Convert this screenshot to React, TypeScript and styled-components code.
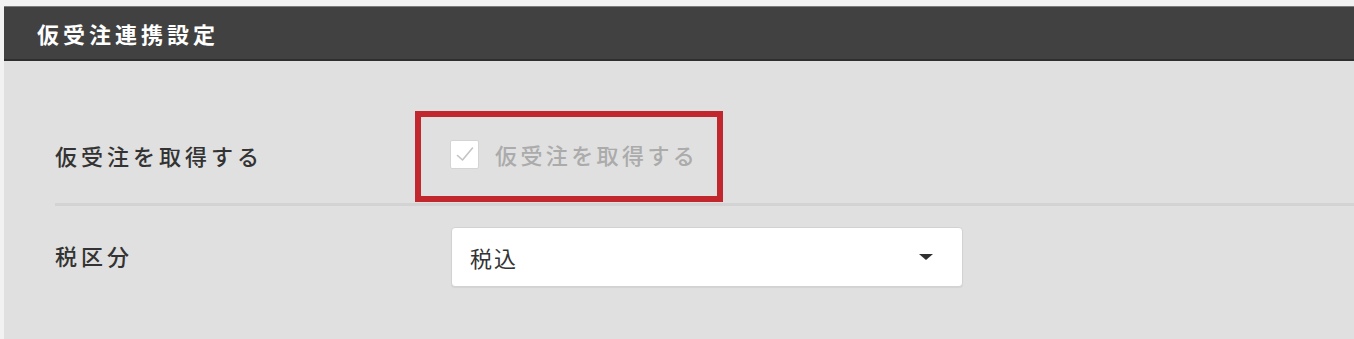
import React from "react";
import styled, { createGlobalStyle } from "styled-components";

const GlobalStyle = createGlobalStyle`
  html, body {
    margin: 0;
    padding: 0;
    background: #f2f2f2;
    font-family: "Noto Sans CJK JP", "Noto Sans", sans-serif;
  }
  * { box-sizing: border-box; }
`;

const Panel = styled.section`
  margin: 6px 0 0 4px;
  height: 333px;
  display: flex;
  flex-direction: column;
  overflow: hidden;
`;

const Header = styled.header`
  height: 55px;
  flex: none;
  display: flex;
  align-items: center;
  padding-left: 33px;
  background: #414141;
  border-top: 1px solid #7c7c7c;
  border-bottom: 2px solid #2e2e2e;
  box-shadow: 0 1px 0 #9a9a9a;
  color: #ffffff;
  font-size: 22px;
  font-weight: 700;
  letter-spacing: 4px;
`;

const Body = styled.div`
  flex: 1;
  background: #e0e0e0;
  padding-left: 51px;
`;

const Row = styled.div<{ $top: number; $bottom: number; $divider?: boolean }>`
  display: grid;
  grid-template-columns: 395px 1fr;
  align-items: center;
  padding-top: ${(p) => p.$top}px;
  padding-bottom: ${(p) => p.$bottom}px;
  border-bottom: ${(p) => (p.$divider ? "3px solid #d3d3d3" : "none")};
`;

const Label = styled.div`
  color: #333333;
  font-size: 22px;
  font-weight: 500;
  letter-spacing: 4px;
  padding-bottom: 4px;
`;

const Highlight = styled.div`
  justify-self: start;
  margin-left: -35px;
  height: 91px;
  display: flex;
  align-items: center;
  gap: 16px;
  padding: 0 19px 5px 29px;
  border: 6px solid #c1272d;
`;

const CheckBox = styled.span`
  width: 29px;
  height: 29px;
  display: flex;
  align-items: center;
  justify-content: center;
  background: #ffffff;
  border: 1px solid #d4d4d4;
  border-radius: 2px;
`;

const CheckLabel = styled.span`
  color: #ababab;
  font-size: 22px;
  font-weight: 500;
  letter-spacing: 3.4px;
`;

const Select = styled.div`
  width: 512px;
  height: 60px;
  margin-left: 1px;
  display: flex;
  align-items: center;
  justify-content: space-between;
  padding: 0 29px 0 18px;
  background: #ffffff;
  border: 1px solid #d2d2d2;
  border-radius: 4px;
  box-shadow: 0 1px 1px rgba(0, 0, 0, 0.06);
  color: #333333;
  font-size: 22px;
  letter-spacing: 2px;
`;

const Caret = styled.span`
  width: 0;
  height: 0;
  border-left: 7px solid transparent;
  border-right: 7px solid transparent;
  border-top: 6px solid #2f2f2f;
`;

export default function App() {
  return (
    <>
      <GlobalStyle />
      <Panel>
        <Header>仮受注連携設定</Header>
        <Body>
          <Row $top={50} $bottom={1} $divider>
            <Label>仮受注を取得する</Label>
            <Highlight>
              <CheckBox>
                <svg width="20" height="18" viewBox="0 0 20 18" fill="none">
                  <path d="M2.5 10.5 L7.5 15 L17.5 3" stroke="#c4c4c4" strokeWidth="1.6" strokeLinecap="round" strokeLinejoin="round" />
                </svg>
              </CheckBox>
              <CheckLabel>仮受注を取得する</CheckLabel>
            </Highlight>
          </Row>
          <Row $top={21} $bottom={0}>
            <Label>税区分</Label>
            <Select>
              <span>税込</span>
              <Caret />
            </Select>
          </Row>
        </Body>
      </Panel>
    </>
  );
}
